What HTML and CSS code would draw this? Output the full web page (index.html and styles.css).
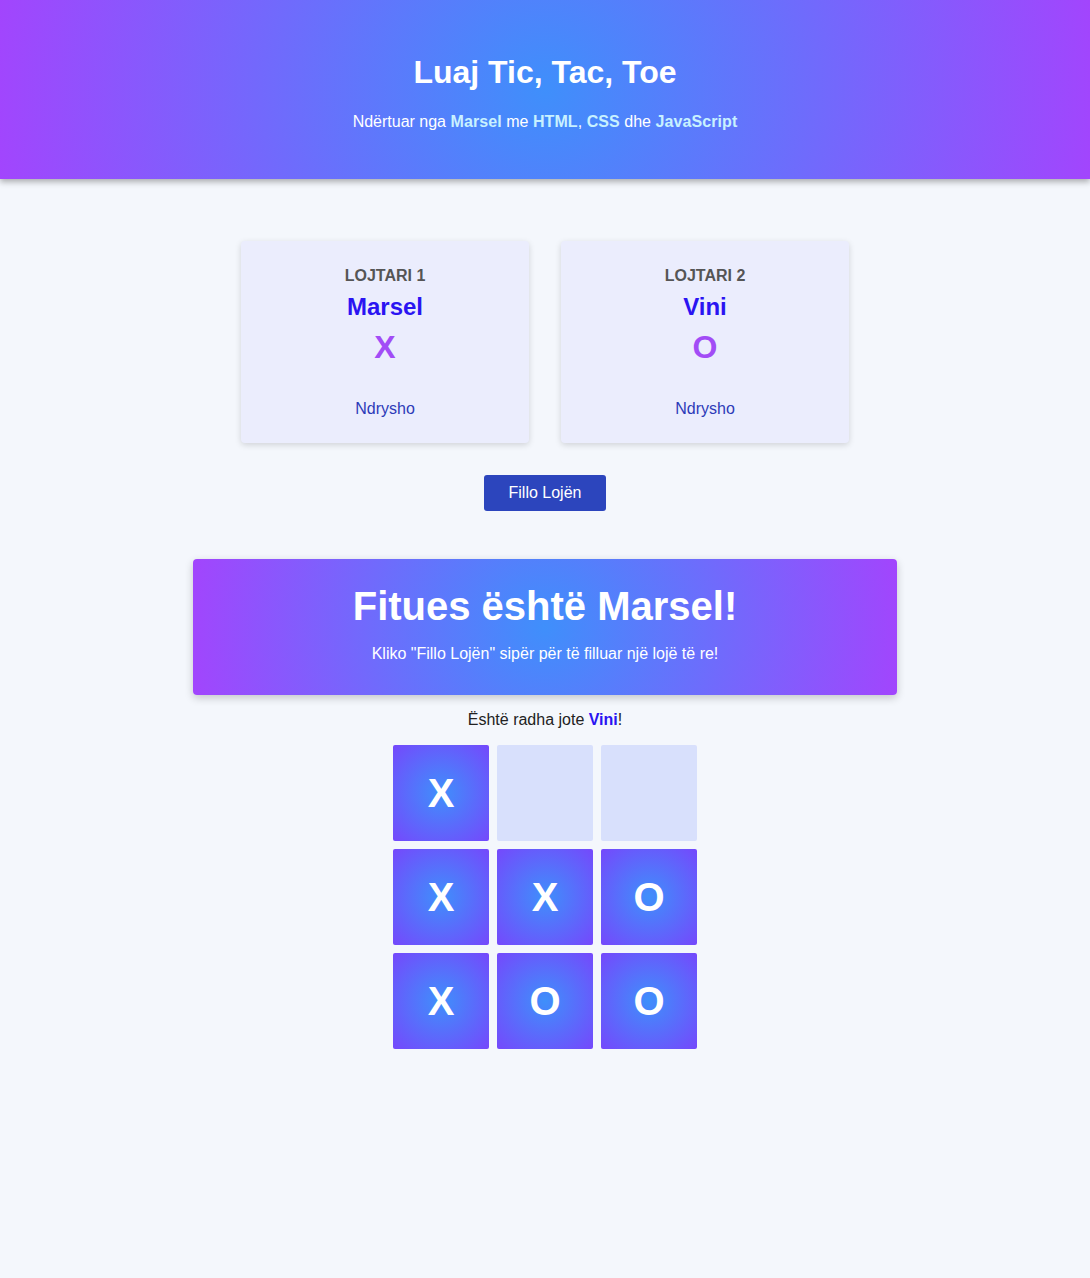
FILE: index.html
```html
<!DOCTYPE html>
<html lang="sq">
<head>
<meta charset="utf-8">
<title>Luaj Tic, Tac, Toe</title>
<link rel="stylesheet" href="styles.css">
</head>
<body>
<header class="hero">
  <h1 class="hero-title">Luaj Tic, Tac, Toe</h1>
  <p class="hero-sub">Ndërtuar nga <strong>Marsel</strong> me <strong>HTML</strong>, <strong>CSS</strong> dhe <strong>JavaScript</strong></p>
</header>
<main class="main">
  <section class="players">
    <div class="card">
      <div class="card-label">LOJTARI 1</div>
      <div class="card-name">Marsel</div>
      <div class="card-symbol">X</div>
      <div class="card-edit">Ndrysho</div>
    </div>
    <div class="card">
      <div class="card-label">LOJTARI 2</div>
      <div class="card-name">Vini</div>
      <div class="card-symbol">O</div>
      <div class="card-edit">Ndrysho</div>
    </div>
  </section>
  <button class="start">Fillo Lojën</button>
  <section class="winner">
    <h2 class="winner-title">Fitues është Marsel!</h2>
    <p class="winner-sub">Kliko "Fillo Lojën" sipër për të filluar një lojë të re!</p>
  </section>
  <p class="turn">Është radha jote <strong>Vini</strong>!</p>
  <div class="board">
    <div class="cell filled">X</div>
    <div class="cell"></div>
    <div class="cell"></div>
    <div class="cell filled">X</div>
    <div class="cell filled">X</div>
    <div class="cell filled">O</div>
    <div class="cell filled">X</div>
    <div class="cell filled">O</div>
    <div class="cell filled">O</div>
  </div>
</main>
</body>
</html>
```

FILE: styles.css
```css
* { box-sizing: border-box; }
html, body { margin: 0; padding: 0; }
body {
  background: #f4f7fc;
  font-family: "Liberation Sans", Arial, sans-serif;
  color: #222;
  min-height: 1278px;
}
.hero {
  height: 179px;
  background: radial-gradient(circle, #3f8ffb 0%, #a245fd 100%);
  box-shadow: 0 3px 6px rgba(0, 0, 0, 0.3);
  text-align: center;
  color: #fff;
  padding-top: 54px;
  position: relative;
}
.hero-title {
  margin: 0;
  font-size: 32px;
  line-height: 37px;
  font-weight: bold;
}
.hero-sub {
  margin: 22px 0 0;
  font-size: 16px;
  line-height: 18px;
}
.hero-sub strong {
  color: #c8f1ff;
  letter-spacing: 0.1px;
}
.main {
  display: flex;
  flex-direction: column;
  align-items: center;
  padding-top: 62px;
}
.players {
  display: flex;
  gap: 32px;
}
.card {
  width: 288px;
  height: 202px;
  background: #ebedfd;
  border-radius: 4px;
  box-shadow: 0 2px 6px rgba(0, 0, 0, 0.15);
  text-align: center;
  padding-top: 26px;
}
.card-label {
  font-size: 16px;
  line-height: 18px;
  font-weight: bold;
  color: #555;
}
.card-name {
  margin-top: 8px;
  font-size: 24px;
  line-height: 28px;
  font-weight: bold;
  color: #2a14f2;
}
.card-symbol {
  margin-top: 8px;
  font-size: 32px;
  line-height: 37px;
  font-weight: bold;
  color: #a24cf6;
}
.card-edit {
  margin-top: 34px;
  font-size: 16px;
  line-height: 18px;
  color: #2d3bb8;
}
.start {
  margin-top: 32px;
  width: 122px;
  height: 36px;
  background: #2c45bd;
  color: #fff;
  border: none;
  border-radius: 3px;
  font-family: "Liberation Sans", Arial, sans-serif;
  font-size: 16px;
  padding: 0;
}
.winner {
  margin-top: 48px;
  width: 704px;
  height: 136px;
  border-radius: 4px;
  background: radial-gradient(circle, #3f8ffb 0%, #a245fd 100%);
  box-shadow: 0 3px 8px rgba(0, 0, 0, 0.2);
  color: #fff;
  text-align: center;
  padding-top: 24px;
}
.winner-title {
  margin: 0;
  font-size: 40px;
  line-height: 46px;
  font-weight: bold;
}
.winner-sub {
  margin: 16px 0 0;
  font-size: 16px;
  line-height: 18px;
}
.turn {
  margin: 16px 0 0;
  font-size: 16px;
  line-height: 18px;
  color: #222;
}
.turn strong { color: #2a14f2; }
.board {
  margin-top: 16px;
  display: grid;
  grid-template-columns: repeat(3, 96px);
  grid-auto-rows: 96px;
  gap: 8px;
}
.cell {
  border-radius: 2px;
  background: #d8e0fc;
  display: flex;
  align-items: center;
  justify-content: center;
  color: #fff;
  font-size: 40px;
  font-weight: bold;
}
.cell.filled {
  background: radial-gradient(circle, #3f8ffb 0%, #7548fc 100%);
}
```
